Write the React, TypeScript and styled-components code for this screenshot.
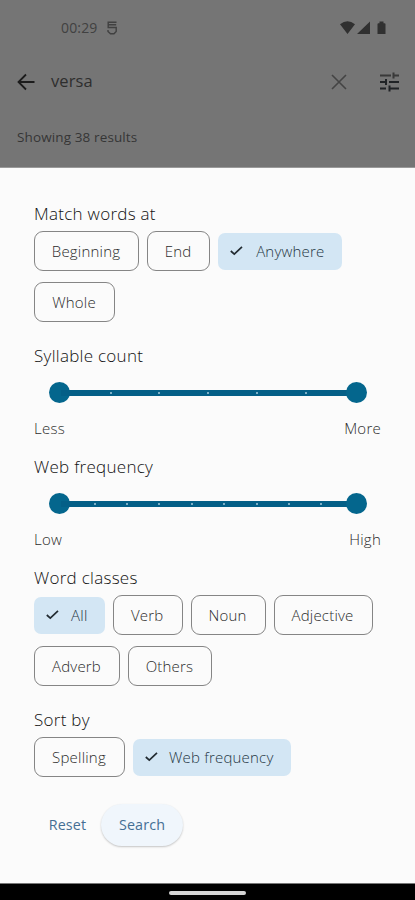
import React from "react";
import styled, { createGlobalStyle, css } from "styled-components";

const GlobalStyle = createGlobalStyle`
  * { box-sizing: border-box; }
  body { margin: 0; font-family: "Open Sans", "Noto Sans", sans-serif; }
`;

const Screen = styled.div`
  width: 415px;
  height: 900px;
  display: flex;
  flex-direction: column;
  overflow: hidden;
  background: #fbfbfb;
`;

const Header = styled.header`
  height: 168px;
  flex: none;
  background: #757575;
  border-bottom: 1px solid #9a9a9a;
  color: #2e2e2e;
`;

const StatusBar = styled.div`
  height: 56px;
  display: flex;
  align-items: center;
  padding: 0 28px 0 61px;
`;

const Clock = styled.span`
  width: 38px;
  font-size: 14px;
  letter-spacing: 0.15px;
  color: #414141;
  margin: -1px 7px 0 0;
`;

const StatusIcons = styled.div`
  margin-left: auto;
  display: flex;
`;

const SearchBar = styled.div`
  height: 53px;
  display: flex;
  align-items: center;
  padding: 0 15px 1px 16px;
`;

const Query = styled.span`
  flex: 1;
  margin: -2px 0 0 15px;
  font-size: 16.5px;
  line-height: 22px;
  letter-spacing: 0.1px;
`;

const TuneSlot = styled.span`
  display: flex;
  margin-left: 32px;
`;

const ResultCount = styled.div`
  padding: 18px 0 0 17px;
  font-size: 13.5px;
  line-height: 20px;
  letter-spacing: 0.12px;
  color: #353535;
`;

const Sheet = styled.main`
  height: 715px;
  flex: none;
  display: flex;
  flex-direction: column;
  padding: 35px 34px 0;
`;

const Section = styled.section<{ $height: number }>`
  height: ${(p) => p.$height}px;
  flex: none;
`;

const Title = styled.h2`
  margin: 0;
  height: 28px;
  font-size: 17px;
  line-height: 21px;
  font-weight: 300;
  letter-spacing: 0.28px;
  color: #111;
`;

const Chips = styled.div`
  display: flex;
  flex-wrap: wrap;
  gap: 11px 8px;
  width: 360px;
`;

const ChipButton = styled.button<{ $width: number; $selected?: boolean }>`
  width: ${(p) => p.$width}px;
  height: 40px;
  display: flex;
  align-items: center;
  justify-content: center;
  padding: 0 1px 0 0;
  border: 1px solid #858585;
  border-radius: 9px;
  background: transparent;
  font: 300 15px/20px "Open Sans", "Noto Sans", sans-serif;
  letter-spacing: 0.2px;
  color: #2c2c2c;
  white-space: nowrap;
  ${(p) =>
    p.$selected &&
    css`
      height: 37px;
      margin: 2px 0 1px;
      justify-content: space-between;
      padding: 0 17.5px 1px 12px;
      border: 0;
      border-radius: 7px;
      background: #d3e6f4;
      color: #263744;
    `}
`;

const Rail = styled.div`
  display: flex;
  align-items: center;
  height: 21px;
  margin: 11px 14px 0 15px;
`;

const Thumb = styled.span`
  width: 21px;
  height: 21px;
  flex: none;
  border-radius: 50%;
  background: #04668d;
`;

const Track = styled.div<{ $inset: number }>`
  flex: 1;
  height: 6px;
  margin: 0 -9px;
  padding: 0 ${(p) => p.$inset}px;
  display: flex;
  align-items: center;
  justify-content: space-between;
  background: #045f87;
`;

const Tick = styled.i`
  width: 2px;
  height: 2px;
  border-radius: 1px;
  background: #a5cadb;
`;

const Ends = styled.div`
  display: flex;
  justify-content: space-between;
  margin-top: 15px;
  font-size: 15px;
  line-height: 21px;
  font-weight: 300;
  letter-spacing: 0.25px;
  color: #2c2c2c;
`;

const Actions = styled.div`
  display: flex;
  align-items: center;
  height: 43px;
`;

const Action = styled.button<{ $raised?: boolean }>`
  height: 42px;
  width: ${(p) => (p.$raised ? 82 : 67)}px;
  padding: 0;
  border: 0;
  border-radius: 21px;
  background: ${(p) => (p.$raised ? "#f0f6fc" : "transparent")};
  box-shadow: ${(p) => (p.$raised ? "0 1px 2px rgba(0,0,0,.22)" : "none")};
  font: 400 14.3px/20px "Open Sans", "Noto Sans", sans-serif;
  letter-spacing: 0.15px;
  color: #456f94;
`;

const NavBar = styled.footer`
  height: 17px;
  flex: none;
  display: flex;
  justify-content: center;
  padding-top: 7px;
  border-top: 1px solid #777;
  background: #000;
`;

const Handle = styled.div`
  width: 77px;
  height: 4px;
  border-radius: 2px;
  background: #d5d5d5;
`;

const Check = () => (
  <svg width="13" height="10" viewBox="0 0 13 10" fill="none" stroke="#222b31" strokeWidth="1.7">
    <path d="M.8 5 4.3 8.2 12 .9" />
  </svg>
);

type ChipSpec = { label: string; width: number; selected?: boolean };

const ChipGroup = ({ items }: { items: ChipSpec[] }) => (
  <Chips>
    {items.map(({ label, width, selected }) => (
      <ChipButton key={label} $width={width} $selected={selected}>
        {selected && <Check />}
        <span>{label}</span>
      </ChipButton>
    ))}
  </Chips>
);

type RangeSliderProps = { ticks: number; inset: number; low: string; high: string };

const RangeSlider = ({ ticks, inset, low, high }: RangeSliderProps) => (
  <>
    <Rail>
      <Thumb />
      <Track $inset={inset}>
        {Array.from({ length: ticks }, (_, i) => (
          <Tick key={i} />
        ))}
      </Track>
      <Thumb />
    </Rail>
    <Ends>
      <span>{low}</span>
      <span>{high}</span>
    </Ends>
  </>
);

const SliderTitle = styled(Title)`
  height: 26px;
`;

export default function App() {
  return (
    <>
      <GlobalStyle />
      <Screen>
        <Header>
          <StatusBar>
            <Clock>00:29</Clock>
            <svg width="12" height="14" viewBox="0 0 12 14" fill="none" stroke="#414141" strokeWidth="1.4">
              <path d="M10.5 1.2H2.2v5.3h8v4L8 12.8H4.5L2 10.5V9M2.2 3.8h8" />
            </svg>
            <StatusIcons>
              <svg width="47" height="14" viewBox="0 0 47 14" fill="#303030">
                <path d="M0 3.2Q7.5-2.8 15 3.2L7.5 13ZM17 13 30 .5V13ZM37.5 3.2q0-1 1-1h1V.5h4v1.7h1q1 0 1 1V13h-8Z" />
              </svg>
            </StatusIcons>
          </StatusBar>
          <SearchBar>
            <svg width="20" height="18" viewBox="0 0 20 18" fill="none" stroke="#1c1c1c" strokeWidth="1.8">
              <path d="M18.5 9H2.5M10 1.5 2.5 9l7.5 7.5" />
            </svg>
            <Query>versa</Query>
            <svg width="16" height="16" viewBox="0 0 16 16" stroke="#444" strokeWidth="1.6">
              <path d="m1 1 14 14M15 1 1 15" />
            </svg>
            <TuneSlot>
              <svg width="21" height="20" viewBox="0 0 21 20" fill="none" strokeWidth="2">
                <path d="M1 3.5h11M15 3.5h5M14.5 0.5v6" stroke="#393939" />
                <path d="M1 10h6M10 10h10M7 7v6M1 16.5h6M11 16.5h9M10.5 13.5v6" stroke="#202326" />
              </svg>
            </TuneSlot>
          </SearchBar>
          <ResultCount>Showing 38 results</ResultCount>
        </Header>
        <Sheet>
          <Section $height={142}>
            <Title>Match words at</Title>
            <ChipGroup
              items={[
                { label: "Beginning", width: 105 },
                { label: "End", width: 63 },
                { label: "Anywhere", width: 124, selected: true },
                { label: "Whole", width: 81 },
              ]}
            />
          </Section>
          <Section $height={111}>
            <SliderTitle>Syllable count</SliderTitle>
            <RangeSlider ticks={5} inset={48.5} low="Less" high="More" />
          </Section>
          <Section $height={111}>
            <SliderTitle>Web frequency</SliderTitle>
            <RangeSlider ticks={8} inset={32.5} low="Low" high="High" />
          </Section>
          <Section $height={142}>
            <Title>Word classes</Title>
            <ChipGroup
              items={[
                { label: "All", width: 71, selected: true },
                { label: "Verb", width: 69.5 },
                { label: "Noun", width: 75 },
                { label: "Adjective", width: 99 },
                { label: "Adverb", width: 86 },
                { label: "Others", width: 84 },
              ]}
            />
          </Section>
          <Section $height={94}>
            <Title>Sort by</Title>
            <ChipGroup
              items={[
                { label: "Spelling", width: 91 },
                { label: "Web frequency", width: 158, selected: true },
              ]}
            />
          </Section>
          <Actions>
            <Action>Reset</Action>
            <Action $raised>Search</Action>
          </Actions>
        </Sheet>
        <NavBar>
          <Handle />
        </NavBar>
      </Screen>
    </>
  );
}
